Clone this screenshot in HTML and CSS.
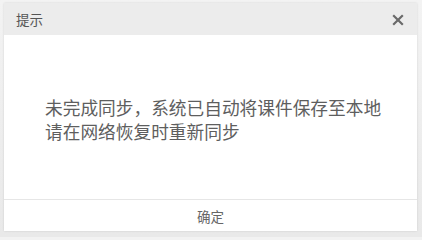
FILE: index.html
```html
<!DOCTYPE html>
<html>
<head>
<meta charset="utf-8">
<link rel="stylesheet" href="styles.css">
</head>
<body>
<div class="frame">
  <div class="dialog">
    <div class="header">
      <span class="title">提示</span>
      <svg class="close" width="12" height="12" viewBox="0 0 12 12"><path d="M1.2 1.2 L10.8 10.8 M10.8 1.2 L1.2 10.8" stroke="#6a6a6a" stroke-width="2.2" stroke-linecap="butt"/></svg>
    </div>
    <div class="body">
      <p class="msg">未完成同步，系统已自动将课件保存至本地<br>请在网络恢复时重新同步</p>
    </div>
    <div class="footer">确定</div>
  </div>
</div>
</body>
</html>
```
FILE: styles.css
```css
html, body {
  margin: 0;
  padding: 0;
  width: 422px;
  height: 237px;
  overflow: hidden;
  background: #f2f2f2;
  font-family: "Noto Sans CJK SC", "Noto Sans", sans-serif;
}
.frame {
  padding: 3px 5px 6px 4px;
  background: linear-gradient(#f3f3f3, #e9e9e9);
  height: 237px;
  box-sizing: border-box;
}
.dialog {
  background: #fff;
  height: 100%;
  display: flex;
  flex-direction: column;
  box-shadow: 0 0 2px rgba(0,0,0,0.12);
}
.header {
  height: 32px;
  background: #ececec;
  display: flex;
  align-items: center;
  justify-content: space-between;
  padding: 0 13px 0 12px;
}
.title {
  font-size: 13.5px;
  color: #555;
}
.close {
  display: block;
  margin-top: 1px;
}
.body {
  flex: 1;
  display: flex;
  align-items: center;
  padding-left: 41px;
  border-bottom: 1px solid #e6e6e6;
}
.msg {
  margin: 0;
  font-size: 17.7px;
  line-height: 24px;
  color: #5e5e5e;
  padding-top: 4px;
}
.footer {
  height: 31px;
  display: flex;
  align-items: center;
  justify-content: center;
  font-size: 13.5px;
  color: #666;
}
```
